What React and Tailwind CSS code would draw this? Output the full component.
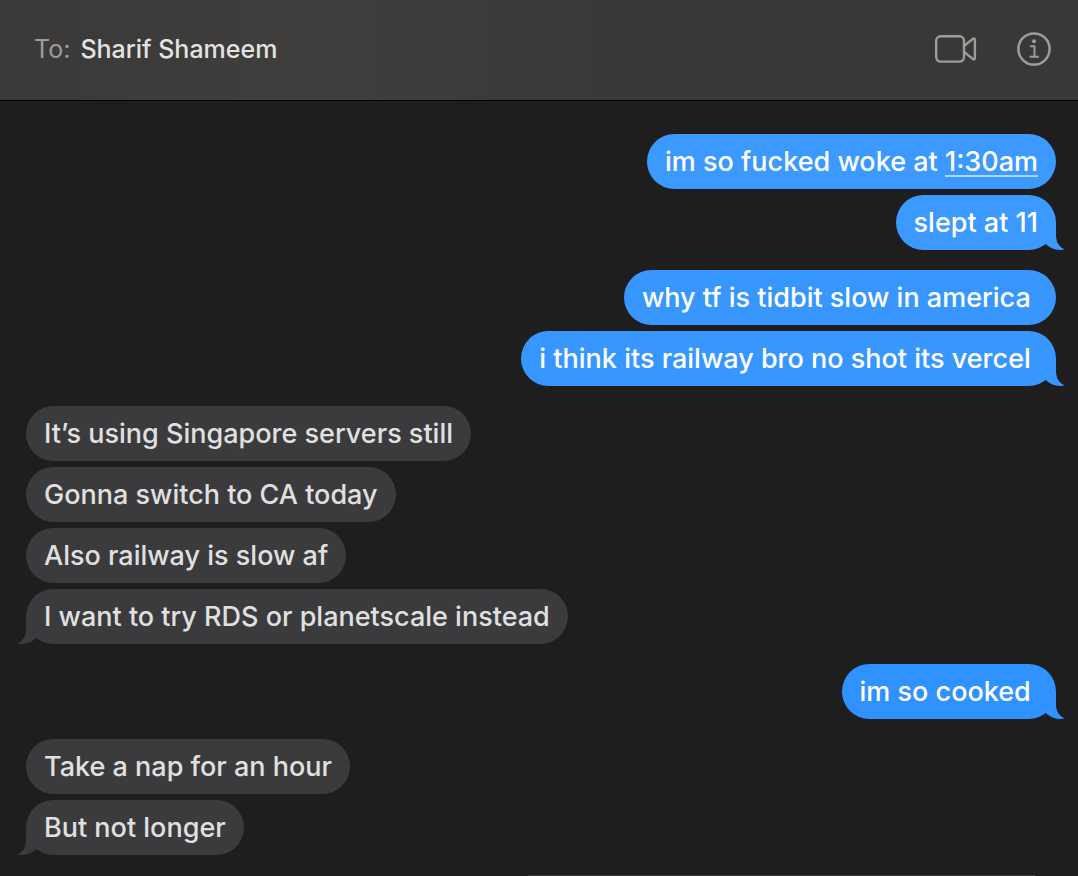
import React from "react";
import clsx from "clsx";

const threads = [
  {
    from: "me",
    color: "bg-[#3b99ff] text-[#3b99ff]",
    messages: [
      { text: "im so fucked woke at ", time: "1:30am" },
      { text: "slept at 11" },
    ],
  },
  {
    from: "me",
    color: "bg-[#3897ff] text-[#3897ff]",
    messages: [
      { text: "why tf is tidbit slow in america " },
      { text: "i think its railway bro no shot its vercel " },
    ],
  },
  {
    from: "them",
    color: "bg-[#3b3b3d] text-[#3b3b3d]",
    messages: [
      { text: "It’s using Singapore servers still" },
      { text: "Gonna switch to CA today" },
      { text: "Also railway is slow af" },
      { text: "I want to try RDS or planetscale instead" },
    ],
  },
  {
    from: "me",
    color: "bg-[#2f92ff] text-[#2f92ff]",
    messages: [{ text: "im so cooked " }],
  },
  {
    from: "them",
    color: "bg-[#3b3b3d] text-[#3b3b3d]",
    messages: [{ text: "Take a nap for an hour" }, { text: "But not longer" }],
  },
];

const Tail = ({ mine }) => (
  <svg
    viewBox="0 0 20 28"
    className={clsx(
      "absolute bottom-0 h-7 w-5",
      mine ? "-right-[9px]" : "-left-[9px] -scale-x-100"
    )}
    fill="currentColor"
    aria-hidden="true"
  >
    <path d="M0 0H11V13C11 20 14 25.500 20 27.300C13 29 6 27 0.700 22L0 20Z" />
  </svg>
);

const Bubble = ({ message, mine, color, last }) => (
  <li className={clsx("relative rounded-[28px] px-[18px] py-2.5", color)}>
    {last && <Tail mine={mine} />}
    <p
      className={clsx(
        "relative whitespace-pre-wrap text-[27px] leading-[35px] font-medium",
        mine ? "text-white" : "text-[#e0e0e0]"
      )}
    >
      {message.text}
      {message.time && (
        <a
          href="#time"
          className="underline decoration-white/60 decoration-2 underline-offset-4"
        >
          {message.time}
        </a>
      )}
    </p>
  </li>
);

const VideoIcon = () => (
  <svg
    viewBox="0 0 42 28"
    className="h-7 w-[42px]"
    fill="none"
    stroke="currentColor"
    strokeWidth="2.4"
    strokeLinejoin="round"
    aria-hidden="true"
  >
    <rect x="1.200" y="1.200" width="27.800" height="25.400" rx="4.500" />
    <path d="M29 11L38 3.700Q39.900 2.800 39.900 5V22.800Q39.900 25 38 24.100L29 16.800" />
  </svg>
);

const InfoIcon = () => (
  <svg
    viewBox="0 0 34 34"
    className="size-[34px]"
    fill="none"
    stroke="currentColor"
    strokeWidth="2.500"
    aria-hidden="true"
  >
    <circle cx="17" cy="17" r="15.600" />
    <circle cx="17" cy="9.300" r="2" fill="currentColor" stroke="none" />
    <path
      d="M13.800 14.300H17.500V24.800M13.400 24.800H21"
      strokeWidth="2"
      strokeLinecap="round"
      strokeLinejoin="round"
    />
  </svg>
);

const App = () => {
  return (
    <div className="flex min-h-screen flex-col bg-[#1e1e1e] font-['Inter','Liberation_Sans',sans-serif]">
      <header className="flex h-[101px] items-center justify-between border-b border-black bg-linear-to-r from-[#3b3a38] via-[#3f3e3c] via-30% to-[#393836] to-60% pr-[27px] pb-0.5 pl-[34px]">
        <h1 className="flex gap-2.5 text-[25px] leading-8">
          <span className="font-normal text-[#9d9c9b]">To:</span>
          <span className="font-medium text-[#e3e3e2]">Sharif Shameem</span>
        </h1>
        <div className="flex items-center gap-10 text-[#9d9c9a]">
          <button type="button" aria-label="Start video call">
            <VideoIcon />
          </button>
          <button type="button" aria-label="Details">
            <InfoIcon />
          </button>
        </div>
      </header>

      <main className="flex flex-1 flex-col gap-5 pt-[33px] pr-[22px] pb-5 pl-[26px]">
        {threads.map((thread, i) => {
          const mine = thread.from === "me";
          return (
            <ul
              key={i}
              className={clsx(
                "flex flex-col gap-1.5",
                mine ? "items-end" : "items-start"
              )}
            >
              {thread.messages.map((message, j) => (
                <Bubble
                  key={j}
                  message={message}
                  mine={mine}
                  color={thread.color}
                  last={j === thread.messages.length - 1}
                />
              ))}
            </ul>
          );
        })}
      </main>

      {/* top edge of the message field */}
      <footer className="mr-[4%] ml-[49%] h-px bg-[#3a3a3a]" />
    </div>
  );
};

export default App;
